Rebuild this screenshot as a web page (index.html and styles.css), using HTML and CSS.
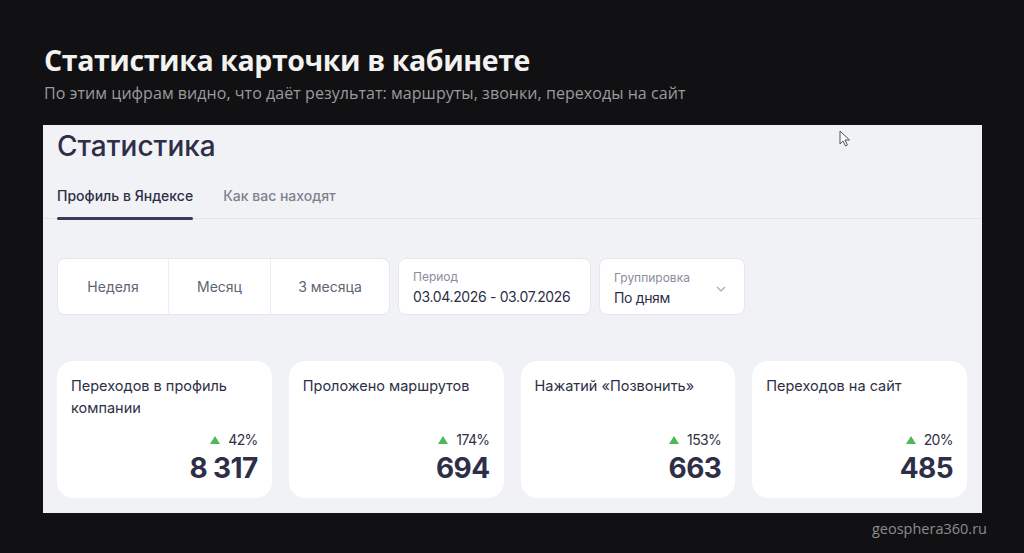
FILE: index.html
```html
<!DOCTYPE html>
<html lang="ru">
<head>
<meta charset="utf-8">
<link rel="stylesheet" href="styles.css">
</head>
<body>
<div class="page">
  <header class="head">
    <h1 class="title">Статистика карточки в кабинете</h1>
    <p class="sub">По этим цифрам видно, что даёт результат: маршруты, звонки, переходы на сайт</p>
  </header>
  <section class="shot">
    <h2 class="h">Статистика</h2>
    <nav class="tabs">
      <span class="tab active">Профиль в Яндексе</span>
      <span class="tab">Как вас находят</span>
    </nav>
    <div class="controls">
      <div class="seg">
        <span class="s s1">Неделя</span>
        <span class="s s2">Месяц</span>
        <span class="s s3">3 месяца</span>
      </div>
      <div class="field period">
        <span class="lbl">Период</span>
        <span class="val">03.04.2026 - 03.07.2026</span>
      </div>
      <div class="field group">
        <div class="fcol">
          <span class="lbl">Группировка</span>
          <span class="val">По дням</span>
        </div>
        <svg class="chev" width="10" height="6" viewBox="0 0 10 6"><path d="M1 1l4 4 4-4" fill="none" stroke="#a3a7b3" stroke-width="1.2"/></svg>
      </div>
    </div>
    <div class="cards">
      <div class="card">
        <div class="ct">Переходов в профиль компании</div>
        <div class="pct"><i class="tri"></i>42%</div>
        <div class="num">8 317</div>
      </div>
      <div class="card">
        <div class="ct">Проложено маршрутов</div>
        <div class="pct"><i class="tri"></i>174%</div>
        <div class="num">694</div>
      </div>
      <div class="card">
        <div class="ct">Нажатий «Позвонить»</div>
        <div class="pct"><i class="tri"></i>153%</div>
        <div class="num">663</div>
      </div>
      <div class="card">
        <div class="ct">Переходов на сайт</div>
        <div class="pct"><i class="tri"></i>20%</div>
        <div class="num">485</div>
      </div>
    </div>
    <svg class="cursor" width="12" height="17" viewBox="0 0 12 17"><path d="M1 1v13l3-3 2.5 5 2-1-2.5-5h4.5z" fill="#f7f8fb" stroke="#555" stroke-width="1"/></svg>
  </section>
  <footer class="foot">geosphera360.ru</footer>
</div>
</body>
</html>
```
FILE: styles.css
```css
* { box-sizing: border-box; }
html, body { margin: 0; padding: 0; }
body { background: #111113; width: 1024px; height: 553px; overflow: hidden; }
.page { display: flex; flex-direction: column; height: 553px; }
.head { padding: 42px 0 0 44px; }
.title { margin: 0; font-family: "Open Sans", sans-serif; font-weight: 700; font-size: 28.5px; line-height: 36px; color: #f2f2f0; letter-spacing: -0.4px; }
.sub { margin: 4px 0 0; font-family: "Open Sans", sans-serif; font-size: 16px; line-height: 22px; color: #9b9b9b; letter-spacing: 0.05px; }
.shot { position: relative; margin: 21px 0 0 43px; width: 939px; height: 388px; background: #f1f2f6; padding: 0 15px 0 14px; overflow: hidden; font-family: Inter, "Noto Sans", sans-serif; }
.h { margin: 0; padding-top: 3px; font-size: 28px; line-height: 36px; font-weight: 500; color: #2e2f47; letter-spacing: 0; }
.tabs { display: flex; gap: 30px; margin: 22px -15px 0 -14px; padding: 0 0 0 14px; border-bottom: 1px solid #e2e4ea; }
.tab { font-size: 14px; line-height: 20px; padding-bottom: 12px; color: #7d8190; font-weight: 500; position: relative; }
.tab.active { color: #2e2f47; }
.tab.active::after { content: ""; position: absolute; left: 0; right: 0; bottom: -2px; height: 3px; border-radius: 2px; background: #393a57; }
.controls { display: flex; gap: 8px; margin-top: 39px; height: 57px; }
.seg { display: flex; background: #fff; border-radius: 8px; border: 1px solid #e7e8ec; }
.s { display: flex; align-items: center; justify-content: center; font-size: 14px; color: #5f6372; }
.s1 { width: 110px; }
.s2 { width: 103px; border-left: 1px solid #eceef2; border-right: 1px solid #eceef2; }
.s3 { width: 118px; }
.field { background: #fff; border-radius: 8px; border: 1px solid #e7e8ec; display: flex; flex-direction: column; padding: 10px 14px 0; }
.period { width: 193px; }
.group { width: 146px; flex-direction: row; align-items: flex-start; justify-content: space-between; padding: 11px 18px 0 14px; }
.fcol { display: flex; flex-direction: column; }
.lbl { font-size: 12px; line-height: 16px; color: #8a8e9b; }
.val { font-size: 14px; line-height: 22px; margin-top: 1px; color: #2e2f47; white-space: nowrap; letter-spacing: -0.35px; }
.chev { margin-top: 16px; }
.cards { display: grid; grid-template-columns: repeat(4, 1fr); gap: 17px; margin-top: 46px; }
.card { background: #fff; border-radius: 16px; height: 137px; padding: 14px 14px 0 14px; display: flex; flex-direction: column; }
.ct { font-size: 14.5px; line-height: 22px; color: #2e2f47; height: 55px; }
.pct { align-self: flex-end; font-size: 14px; line-height: 20px; color: #2e2f47; display: flex; align-items: center; gap: 8px; letter-spacing: -0.6px; }
.tri { width: 0; height: 0; border-left: 5px solid transparent; border-right: 5px solid transparent; border-bottom: 8px solid #4cb857; }
.num { align-self: flex-end; font-size: 28px; line-height: 34px; font-weight: 700; color: #2e2f47; letter-spacing: -0.6px; margin-top: 1px; }
.cursor { position: absolute; left: 796px; top: 5px; }
.foot { margin: 6px 37px 0 0; align-self: flex-end; font-family: "Open Sans", sans-serif; font-size: 14.5px; color: #8c8c8c; line-height: 20px; }
```
